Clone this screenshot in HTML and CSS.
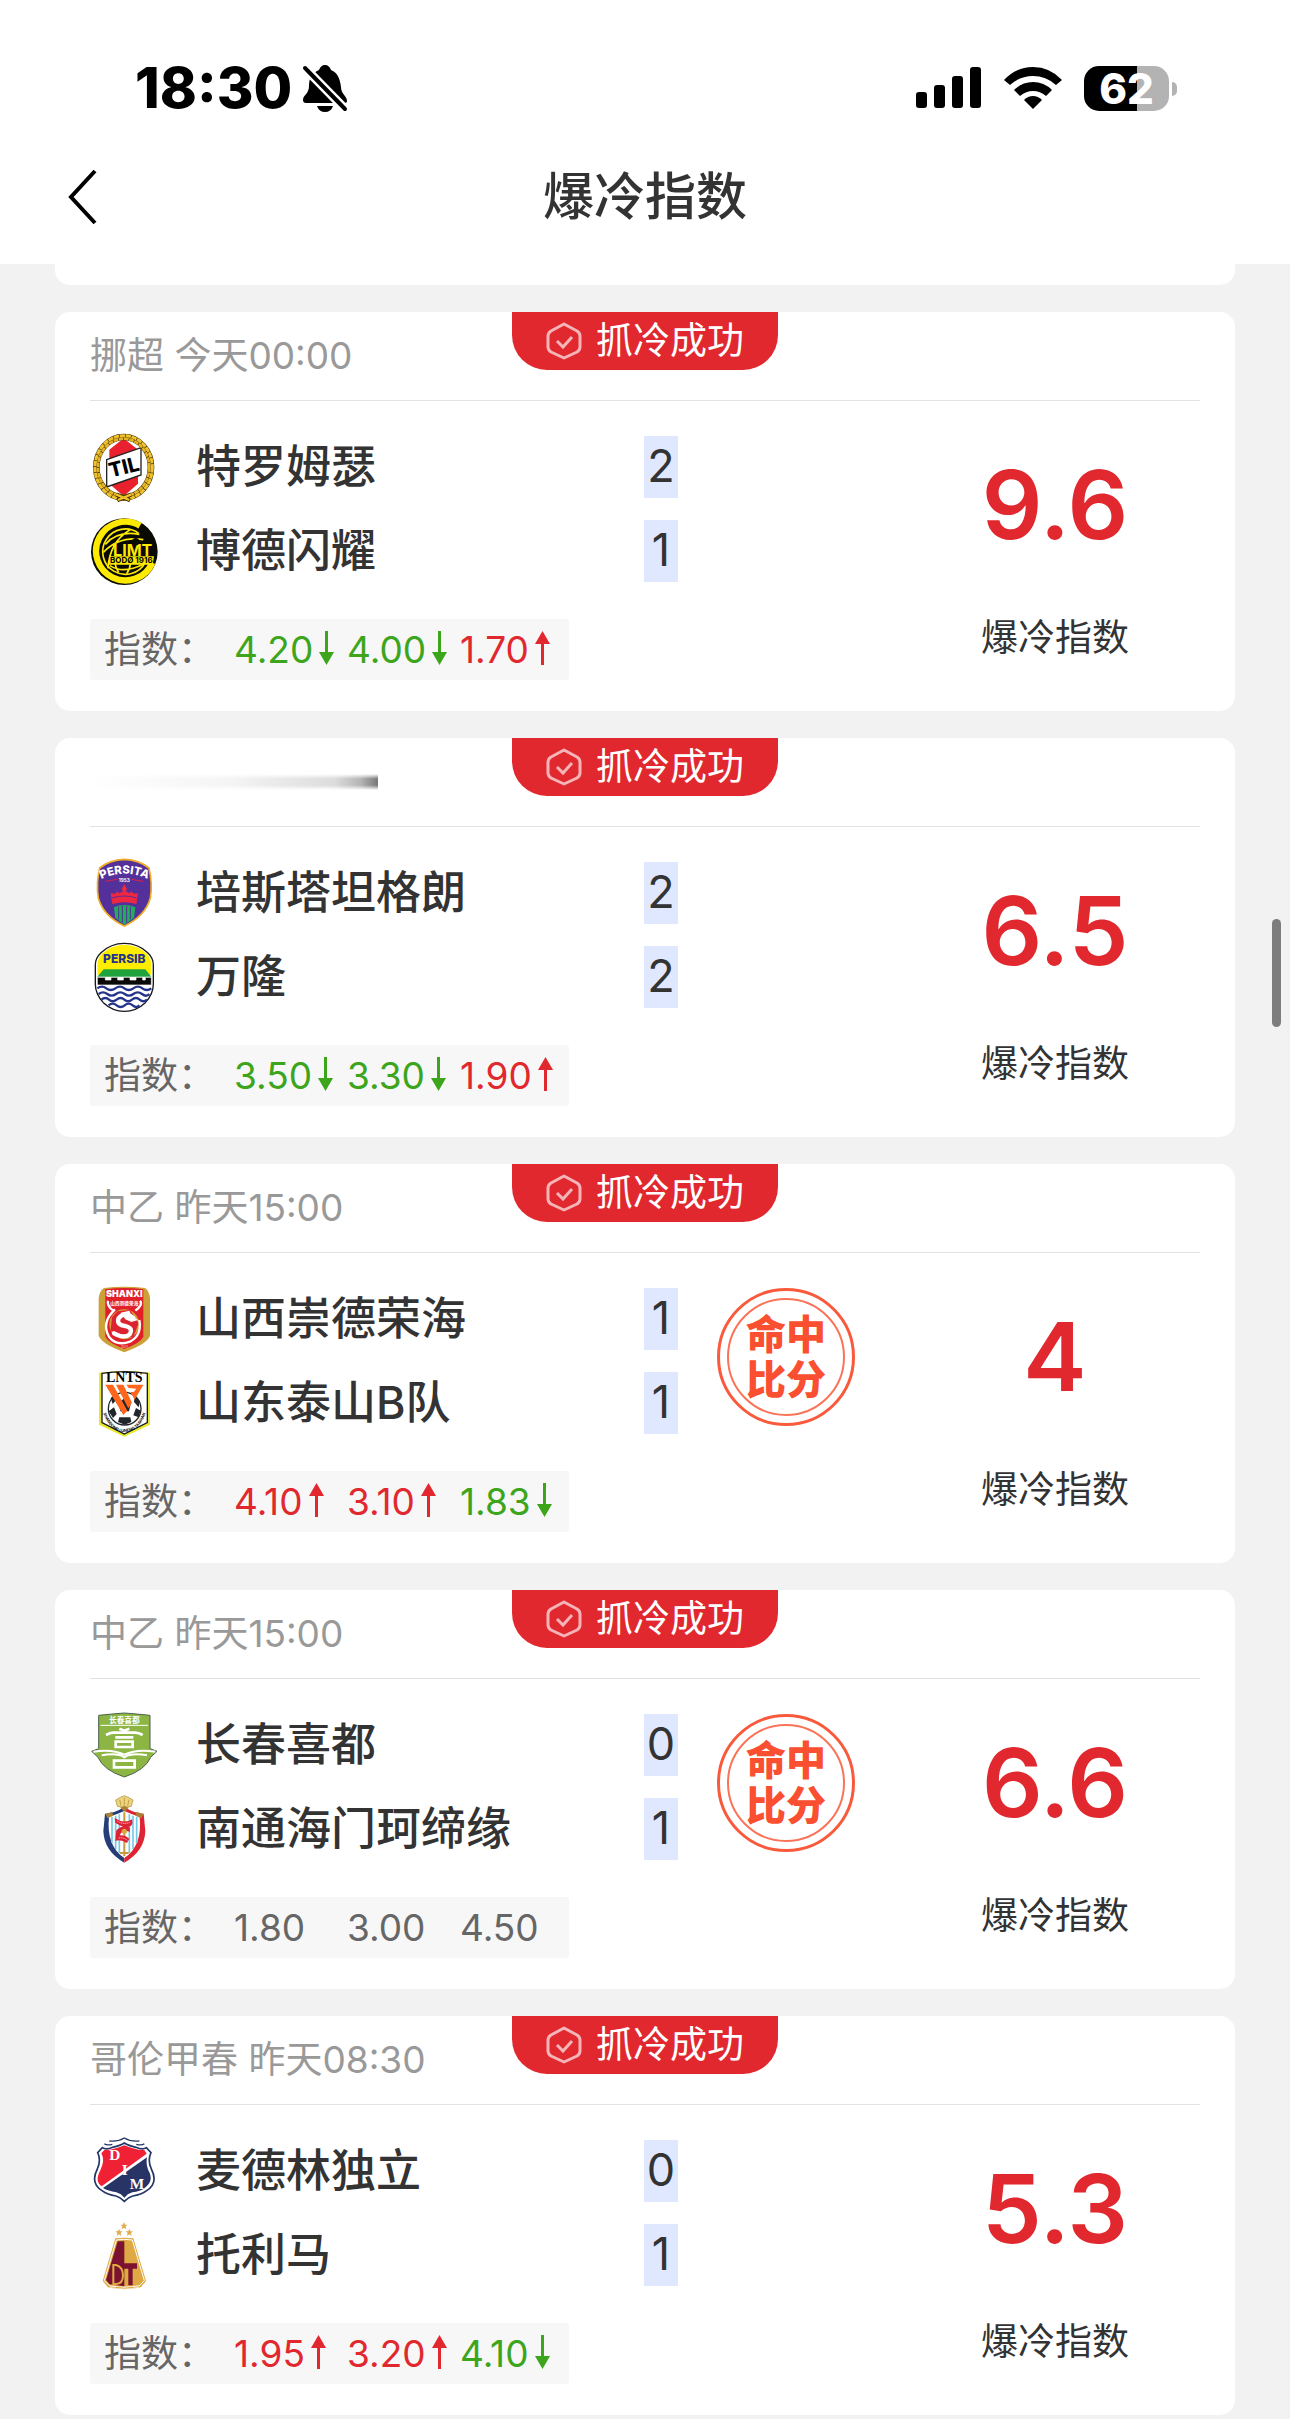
FILE: index.html
```html
<!DOCTYPE html>
<html lang="zh-CN">
<head>
    <meta charset="UTF-8">
    <meta name="viewport" content="width=device-width, initial-scale=1.0">
    <title>爆冷指数</title>
    <link rel="stylesheet" href="styles.css">
</head>
<body>

    <!-- shared icons -->
    <svg class="sprite" aria-hidden="true">
        <symbol id="icon-check" viewBox="0 0 36 38">
            <path d="M18 2 L31 9 Q34 11 34 14 V25 Q34 28 31 30 L18 36 L5 30 Q2 28 2 25 V14 Q2 11 5 9 Z" fill="none" stroke="currentColor" stroke-width="3" stroke-linejoin="round"/>
            <path d="M11 19 L17 25 L26 15" fill="none" stroke="currentColor" stroke-width="3"/>
        </symbol>
        <symbol id="icon-down" viewBox="0 0 15 36">
            <path d="M7.5 1 V26" stroke="currentColor" stroke-width="3"/>
            <path d="M0 22 H15 L7.5 35 Z" fill="currentColor"/>
        </symbol>
        <symbol id="icon-up" viewBox="0 0 15 36">
            <path d="M7.5 10 V35" stroke="currentColor" stroke-width="3"/>
            <path d="M0 14 H15 L7.5 1 Z" fill="currentColor"/>
        </symbol>
    </svg>

    <header class="top">
        <div class="status">
            <span class="clock">18:30</span>
            <svg class="bell" viewBox="0 0 46 48" width="46" height="48">
                <path d="M23 1 C26 1 28 3 29 6 C36 9 38 15 39 23 C39 30 45 32 45 37 Q45 39 42 39 H4 Q1 39 1 36 C1 31 7 30 7 22 C7 14 10 9 17 6 C18 3 20 1 23 1 Z"/>
                <path d="M15 42 H31 Q29 48 23 48 Q17 48 15 42 Z"/>
                <path d="M0 1 L45 47" stroke="#fff" stroke-width="9"/>
                <path d="M3 4 L43 45" stroke="#000" stroke-width="4" stroke-linecap="round"/>
            </svg>
            <div class="indicators">
                <svg viewBox="0 0 66 42" width="66" height="42">
                    <rect x="0" y="25" width="11" height="16" rx="3"/>
                    <rect x="18" y="18" width="11" height="23" rx="3"/>
                    <rect x="36" y="9" width="11" height="32" rx="3"/>
                    <rect x="54" y="0" width="11" height="41" rx="3"/>
                </svg>
                <svg viewBox="0 0 58 42" width="58" height="42">
                    <path d="M0 13 Q12 0 29 0 Q46 0 58 13 L52 18 Q42 9 29 9 Q16 9 6 18 Z"/>
                    <path d="M10 23 Q18 15 29 15 Q40 15 48 23 L42 29 Q36 24 29 24 Q22 24 16 29 Z"/>
                    <path d="M20 33 Q24 29 29 29 Q34 29 38 33 L29 42 Z"/>
                </svg>
                <div class="battery"><span>62</span></div>
            </div>
        </div>
        <nav class="nav">
            <button class="back" type="button" aria-label="返回">
                <svg viewBox="0 0 30 56" width="30" height="56"><path d="M27 2 L3 28 L27 54" fill="none" stroke="#000" stroke-width="4"/></svg>
            </button>
            <h1>爆冷指数</h1>
        </nav>
    </header>

    <main class="list">
        <div class="card card-tail"></div>

        <article class="card">
            <div class="card-head">
                <span class="meta">挪超 今天00:00</span>
                <span class="badge"><svg><use href="#icon-check"/></svg>抓冷成功</span>
            </div>
            <div class="card-body">
                <div class="teams">
                    <div class="team">
                        <svg class="crest" viewBox="30 39 210 210">
                            <ellipse cx="131" cy="145" rx="76" ry="86" fill="#fff"/>
                            <path d="M131 58 L174 92 V194 L131 232 L88 194 V92 Z" fill="#e9202e"/>
                            <path d="M80 122 L183 86 V168 L80 204 Z" fill="#fff" stroke="#222" stroke-width="4"/>
                            <ellipse cx="131" cy="145" rx="82" ry="91" fill="none" stroke="#3d2e08" stroke-width="20"/>
                            <ellipse cx="131" cy="145" rx="86" ry="95" fill="none" stroke="#f0c22c" stroke-width="9" stroke-dasharray="16 2"/>
                            <ellipse cx="131" cy="145" rx="77" ry="86" fill="none" stroke="#e5b426" stroke-width="8" stroke-dasharray="14 2"/>
                            <path d="M108 226 L150 244 M154 226 L112 244" stroke="#3d2e08" stroke-width="12"/>
                            <path d="M108 226 L148 243 M154 226 L114 243" stroke="#f0c22c" stroke-width="7"/>
                            <text x="132" y="165" transform="rotate(-14 133 145)" text-anchor="middle" class="til">TIL</text>
                        </svg>
                        <span>特罗姆瑟</span>
                    </div>
                    <div class="team">
                        <svg class="crest" viewBox="30 291 210 210">
                            <circle cx="133" cy="398" r="100" fill="#0a0a05"/>
                            <path d="M180 320 A88 88 0 1 0 217 431" fill="none" stroke="#fdea00" stroke-width="19"/>
                            <g fill="none" stroke="#fdea00" stroke-width="5">
                                <path d="M176 343 A68 68 0 1 0 196 430"/>
                                <path d="M76 376 Q112 334 178 346 M70 400 Q118 350 190 362 M84 448 Q88 370 150 332 M116 460 Q104 440 106 430 M90 440 Q130 466 190 436 M140 464 Q150 450 152 430"/>
                            </g>
                            <text x="158" y="410" text-anchor="middle" class="limt">LIMT</text>
                            <circle cx="167" cy="368" r="11" fill="#0a0a05"/>
                            <path d="M87 412 H222 L218 437 H87 Z" fill="#fdea00"/>
                            <text x="154" y="433" text-anchor="middle" class="bodo">BODØ 1916</text>
                        </svg>
                        <span>博德闪耀</span>
                    </div>
                </div>
                <div class="scores"><span>2</span><span>1</span></div>
                <div class="mark"></div>
                <div class="odds">
                    <span class="odds-label">指数：</span>
                    <span class="odd down">4.20<svg><use href="#icon-down"/></svg></span>
                    <span class="odd down">4.00<svg><use href="#icon-down"/></svg></span>
                    <span class="odd up">1.70<svg><use href="#icon-up"/></svg></span>
                </div>
                <div class="index"><strong>9.6</strong><span>爆冷指数</span></div>
            </div>
        </article>

        <article class="card">
            <div class="card-head">
                <span class="smear"></span>
                <span class="badge"><svg><use href="#icon-check"/></svg>抓冷成功</span>
            </div>
            <div class="card-body">
                <div class="teams">
                    <div class="team">
                        <svg class="crest" viewBox="30 42 210 210">
                            <path d="M133 46 Q178 48 207 72 Q218 118 211 162 Q196 216 133 246 Q70 216 55 162 Q48 118 59 72 Q88 48 133 46 Z" fill="#54309a" stroke="#f1ac27" stroke-width="5"/>
                            <path id="persita-arc" d="M58 108 Q133 70 209 108" fill="none"/>
                            <text text-anchor="middle" class="persita"><textPath href="#persita-arc" startOffset="50%">PERSITA</textPath></text>
                            <text x="133" y="113" text-anchor="middle" class="persita-year">1953</text>
                            <path d="M76 112 L112 106 M154 106 L190 112" stroke="#df1f43" stroke-width="3"/>
                            <path d="M133 121 L141 135 L137 142 L149 148 L154 142 L160 149 L174 148 L169 180 Q133 170 97 180 L92 148 L106 149 L112 142 L118 148 L129 142 L125 135 Z" fill="#ef2740"/>
                            <path d="M96 162 Q133 150 170 162" fill="none" stroke="#54309a" stroke-width="3"/>
                            <path d="M102 190 Q133 176 166 190 L162 222 L133 242 L106 222 Z" fill="#20ad5b"/>
                            <path d="M116 188 V226 M127 186 V236 M140 186 V236 M151 188 V226" stroke="#54309a" stroke-width="3"/>
                        </svg>
                        <span>培斯塔坦格朗</span>
                    </div>
                    <div class="team">
                        <svg class="crest" viewBox="30 294 210 210">
                            <path d="M133 298 Q174 298 203 326 Q220 342 220 362 V420 Q220 450 196 476 Q168 502 133 502 Q98 502 70 476 Q46 450 46 420 V362 Q46 342 63 326 Q92 298 133 298 Z" fill="#fff" stroke="#15171c" stroke-width="4"/>
                            <path d="M133 302 Q174 303 201 330 Q214 345 214 362 V392 H52 V362 Q52 345 65 330 Q92 303 133 302 Z" fill="#ffed00"/>
                            <path d="M71 376 H196 L214 398 H52 Z" fill="#20a33c"/>
                            <path d="M52 423 V400 H76 V408 H93 V400 H113 V408 H130 V400 H150 V408 H168 V400 H188 V408 H196 V400 H214 V423 Z" fill="#090909" stroke="#fff" stroke-width="2"/>
                            <g fill="none" stroke="#24338b" stroke-width="7">
                                <path d="M52 433 q14 -10 27 0 t27 0 t27 0 t27 0 t27 0 t27 0"/>
                                <path d="M56 450 q13 -10 26 0 t26 0 t26 0 t26 0 t26 0 t22 0"/>
                                <path d="M64 467 q12 -10 23 0 t23 0 t23 0 t23 0 t23 0 t22 0"/>
                                <path d="M86 484 q12 -10 24 0 t24 0 t24 0 t20 0"/>
                            </g>
                            <text x="133" y="356" text-anchor="middle" class="persib">PERSIB</text>
                        </svg>
                        <span>万隆</span>
                    </div>
                </div>
                <div class="scores"><span>2</span><span>2</span></div>
                <div class="mark"></div>
                <div class="odds">
                    <span class="odds-label">指数：</span>
                    <span class="odd down">3.50<svg><use href="#icon-down"/></svg></span>
                    <span class="odd down">3.30<svg><use href="#icon-down"/></svg></span>
                    <span class="odd up">1.90<svg><use href="#icon-up"/></svg></span>
                </div>
                <div class="index"><strong>6.5</strong><span>爆冷指数</span></div>
            </div>
        </article>

        <article class="card">
            <div class="card-head">
                <span class="meta">中乙 昨天15:00</span>
                <span class="badge"><svg><use href="#icon-check"/></svg>抓冷成功</span>
            </div>
            <div class="card-body">
                <div class="teams">
                    <div class="team">
                        <svg class="crest" viewBox="30 42 210 210">
                            <path d="M72 54 Q133 46 195 54 Q207 62 210 84 V196 Q206 220 133 247 Q60 220 56 196 V84 Q59 62 72 54 Z" fill="#cda038"/>
                            <path d="M76 58 Q133 50 190 58 V200 Q182 218 133 237 Q84 218 76 200 Z" fill="#e01f2b"/>
                            <circle cx="133" cy="163" r="45" fill="#d89b3a"/>
                            <path d="M112 124 L150 120 L176 160 L160 200 L112 206 L92 180 L96 142 Z" fill="#db2430"/>
                            <path d="M105 118 Q62 158 88 202 Q110 230 152 214 Q186 195 178 150 M166 122 Q190 104 180 92 M100 122 Q80 108 84 92" fill="none" stroke="#fff" stroke-width="7"/>
                            <path d="M160 144 Q132 122 115 146 Q110 166 136 168 Q161 174 149 193 Q133 207 102 190" fill="none" stroke="#fff" stroke-width="13" stroke-linecap="round"/>
                            <path d="M122 128 L148 122 L154 136 L174 150 L154 156 L136 148 Z" fill="#fff"/>
                            <text x="133" y="81" text-anchor="middle" class="shanxi">SHANXI</text>
                            <text x="133" y="104" text-anchor="middle" class="shanxi-cn">山西崇德荣海</text>
                            <text x="133" y="233" text-anchor="middle" class="shanxi-year">2021</text>
                        </svg>
                        <span>山西崇德荣海</span>
                    </div>
                    <div class="team">
                        <svg class="crest" viewBox="30 294 210 210">
                            <path d="M57 308 Q133 298 210 308 V464 L133 500 L57 464 Z" fill="#e9e82a"/>
                            <path d="M66 310 Q133 300 202 310 V458 L133 492 L66 458 Z" fill="#fff" stroke="#171a1d" stroke-width="4"/>
                            <circle cx="134" cy="416" r="49" fill="#fff" stroke="#20262b" stroke-width="4"/>
                            <path d="M116 398 L134 384 L153 398 L147 424 H121 Z M92 384 L104 374 L114 384 L98 402 Z M164 376 L180 394 L176 412 L162 396 Z M86 424 L102 412 L110 432 L99 444 Z M168 414 L182 422 L176 442 L160 436 Z M118 442 H151 L154 456 L134 464 L114 456 Z" fill="#20262b"/>
                            <path d="M76 344 H99 L142 422 L130 435 Z M108 344 H130 L156 398 L145 415 Z M139 344 H190 L164 389 L151 366 H161 L169 356 L146 354 Z" fill="#ff661c"/>
                            <text x="133" y="336" text-anchor="middle" class="lnts">LNTS</text>
                            <path id="lnts-arc" d="M70 430 Q92 488 134 486 Q178 484 197 430" fill="none"/>
                            <text text-anchor="middle" class="luneng"><textPath href="#lnts-arc" startOffset="50%">SHANDONG LUNENG TAISHAN</textPath></text>
                        </svg>
                        <span>山东泰山B队</span>
                    </div>
                </div>
                <div class="scores"><span>1</span><span>1</span></div>
                <div class="mark"><span class="stamp">命中<br>比分</span></div>
                <div class="odds">
                    <span class="odds-label">指数：</span>
                    <span class="odd up">4.10<svg><use href="#icon-up"/></svg></span>
                    <span class="odd up">3.10<svg><use href="#icon-up"/></svg></span>
                    <span class="odd down">1.83<svg><use href="#icon-down"/></svg></span>
                </div>
                <div class="index"><strong>4</strong><span>爆冷指数</span></div>
            </div>
        </article>

        <article class="card">
            <div class="card-head">
                <span class="meta">中乙 昨天15:00</span>
                <span class="badge"><svg><use href="#icon-check"/></svg>抓冷成功</span>
            </div>
            <div class="card-body">
                <div class="teams">
                    <div class="team">
                        <svg class="crest" viewBox="30 30 210 210">
                            <path d="M56 46 Q94 42 133 39 Q172 42 210 46 V146 L231 154 L212 172 Q196 210 133 231 Q70 210 54 172 L35 154 L56 146 Z" fill="#8cb543" stroke="#4d6150" stroke-width="3"/>
                            <text x="133" y="69" text-anchor="middle" class="changchun">长春喜都</text>
                            <path d="M62 76 H204" stroke="#fff" stroke-width="3"/>
                            <g fill="none" stroke="#fff" stroke-width="8">
                                <path d="M78 105 Q92 98 100 98 H166 Q176 98 188 105 M118 86 L133 92 L148 86 M106 112 H160"/>
                                <path d="M107 125 H158 V141 H107 Z"/>
                                <path d="M40 155 Q96 146 133 164 Q170 146 226 155 M65 166 Q112 158 133 172 Q154 158 201 166" stroke-width="6"/>
                                <path d="M102 182 H164 V202 H102 Z"/>
                            </g>
                        </svg>
                        <span>长春喜都</span>
                    </div>
                    <div class="team">
                        <svg class="crest" viewBox="30 285 210 210">
                            <path d="M112 322 L107 303 L119 296 L133 290 L147 296 L159 303 L154 322 Q133 330 112 322 Z" fill="#edd47c" stroke="#a98932" stroke-width="2"/>
                            <path d="M119 302 L123 320 M133 296 V320 M147 302 L143 320" stroke="#a98932" stroke-width="2"/>
                            <path d="M75 344 Q106 342 133 323 V491 Q72 456 70 396 Z" fill="#253d78"/>
                            <path d="M191 344 Q160 342 133 323 V491 Q194 456 196 396 Z" fill="#de2434"/>
                            <path d="M87 353 Q112 346 133 336 Q154 346 179 353 Q188 440 133 477 Q78 440 87 353 Z" fill="#fff"/>
                            <path d="M96 354 V432 M107 350 V450 M118 346 V462 M148 346 V462 M159 350 V450 M170 354 V432" stroke="#75c9e6" stroke-width="5"/>
                            <path d="M77 346 L96 338 L100 350 L82 358 Z M170 338 L190 346 L184 358 L166 350 Z M121 326 L133 320 L146 326 L133 338 Z" fill="#a98236"/>
                            <path d="M133 340 V472 M120 462 H146" stroke="#c69a3c" stroke-width="6"/>
                            <path d="M104 357 Q132 376 156 361 Q160 378 151 382 Q130 388 106 371 Z M109 394 Q128 376 149 385 L150 398 Q126 390 119 409 Q136 408 148 419 L141 432 Q122 420 106 426 Z" fill="#df2136"/>
                            <path d="M111 366 Q131 378 150 370 M116 417 Q130 414 142 424" fill="none" stroke="#fff" stroke-width="2" stroke-dasharray="4 2"/>
                            <circle cx="133" cy="397" r="8" fill="#d7a645"/>
                        </svg>
                        <span>南通海门珂缔缘</span>
                    </div>
                </div>
                <div class="scores"><span>0</span><span>1</span></div>
                <div class="mark"><span class="stamp">命中<br>比分</span></div>
                <div class="odds">
                    <span class="odds-label">指数：</span>
                    <span class="odd">1.80</span>
                    <span class="odd">3.00</span>
                    <span class="odd">4.50</span>
                </div>
                <div class="index"><strong>6.6</strong><span>爆冷指数</span></div>
            </div>
        </article>

        <article class="card">
            <div class="card-head">
                <span class="meta">哥伦甲春 昨天08:30</span>
                <span class="badge"><svg><use href="#icon-check"/></svg>抓冷成功</span>
            </div>
            <div class="card-body">
                <div class="teams">
                    <div class="team">
                        <svg class="crest" viewBox="30 33 210 210">
                            <path d="M88 48 Q113 51 133 39 Q153 51 178 48 M73 56 Q80 62 97 58 M169 58 Q186 62 193 56" fill="none" stroke="#243767" stroke-width="4"/>
                            <path d="M67 68 Q78 76 98 67 Q121 62 133 54 Q145 62 168 67 Q188 76 199 68 L213 83 Q202 105 214 132 Q236 174 200 197 Q184 209 158 213 Q144 217 133 229 Q122 217 108 213 Q82 209 66 197 Q30 174 52 132 Q64 105 53 83 Z" fill="#fff" stroke="#243767" stroke-width="5"/>
                            <path d="M73 75 Q95 77 133 61 Q171 77 193 75 L200 86 L65 184 Q43 169 61 136 Q76 106 64 85 Z" fill="#f02035"/>
                            <path d="M201 97 Q197 115 205 136 Q224 168 193 190 Q181 199 157 202 Q142 206 133 218 Q124 206 109 202 Q84 198 69 189 Z" fill="#293466"/>
                            <text x="104" y="105" text-anchor="middle" class="dim">D</text>
                            <text x="134" y="150" text-anchor="middle" class="dim">I</text>
                            <text x="171" y="191" text-anchor="middle" class="dim">M</text>
                        </svg>
                        <span>麦德林独立</span>
                    </div>
                    <div class="team">
                        <svg class="crest" viewBox="30 285 210 210">
                            <g fill="#dfac50">
                                <path id="star" d="M132 291 L135 299 H143 L137 304 L139 313 L132 308 L125 313 L127 304 L121 299 H129 Z"/>
                                <use href="#star" x="-15" y="20"/>
                                <use href="#star" x="16" y="20"/>
                            </g>
                            <path d="M106 340 Q133 336 160 340 L198 468 L182 487 Q133 499 84 487 L68 468 Z" fill="#dfaa43"/>
                            <path d="M109 345 Q133 341 157 345 L193 467 L178 482 Q133 491 88 482 L73 467 Z" fill="none" stroke="#fff" stroke-width="3"/>
                            <path d="M113 349 H133 V415 H171 V431 H158 V481 H145 V431 H133 V484 L89 478 L78 465 Z" fill="#7b1230"/>
                            <path d="M100 420 H108 Q129 426 129 451 Q129 477 108 477 H100 Z" fill="none" stroke="#dfaa43" stroke-width="6"/>
                            <path d="M90 487 Q133 497 176 487" stroke="#fff" stroke-width="2" fill="none"/>
                        </svg>
                        <span>托利马</span>
                    </div>
                </div>
                <div class="scores"><span>0</span><span>1</span></div>
                <div class="mark"></div>
                <div class="odds">
                    <span class="odds-label">指数：</span>
                    <span class="odd up">1.95<svg><use href="#icon-up"/></svg></span>
                    <span class="odd up">3.20<svg><use href="#icon-up"/></svg></span>
                    <span class="odd down">4.10<svg><use href="#icon-down"/></svg></span>
                </div>
                <div class="index"><strong>5.3</strong><span>爆冷指数</span></div>
            </div>
        </article>
    </main>

    <div class="scroll-thumb"></div>

</body>
</html>
```
FILE: styles.css
```css
* {
    box-sizing: border-box;
}
body {
    margin: 0;
    background: #f2f2f2;
    color: #333;
    font-family: Inter, "Noto Sans CJK SC", sans-serif;
    font-size: 37px;
    line-height: 50px;
}
.sprite {
    display: none;
}

/* header */
.top {
    background: #fff;
    height: 264px;
    padding-top: 56px;
}
.status {
    display: flex;
    align-items: center;
    height: 64px;
    padding: 0 113px 0 135px;
}
.clock {
    color: #000;
    font-size: 56px;
    font-weight: 800;
}
.bell {
    margin-left: 10px;
}
.indicators {
    display: flex;
    align-items: center;
    gap: 22px;
    margin-left: auto;
}
.battery {
    position: relative;
    width: 85px;
    height: 45px;
    margin-right: 8px;
    border-radius: 15px;
    background: linear-gradient(to right, #000 62%, #b3b3b3 62%);
    color: #fff;
    font-size: 42px;
    font-weight: 800;
    line-height: 45px;
    text-align: center;
}
.battery::after {
    content: "";
    position: absolute;
    right: -8px;
    top: 16px;
    width: 5px;
    height: 14px;
    border-radius: 0 5px 5px 0;
    background: #b3b3b3;
}
.nav {
    display: grid;
    grid-template-columns: 98px 1fr 98px;
    align-items: center;
    height: 154px;
}
.back {
    display: flex;
    justify-content: flex-end;
    padding: 0;
    border: none;
    background: none;
    cursor: pointer;
}
h1 {
    margin: 0;
    font-size: 51px;
    font-weight: 500;
    text-align: center;
}

/* match cards */
.list {
    display: flex;
    flex-direction: column;
    gap: 27px;
    padding: 0 55px 4px;
}
.card {
    padding: 0 35px 31px;
    border-radius: 15px;
    background: #fff;
}
.card-tail {
    height: 21px;
    padding: 0;
    border-radius: 0 0 15px 15px;
}
.card-head {
    display: grid;
    grid-template-columns: 1fr 266px 1fr;
    align-items: center;
    height: 89px;
    border-bottom: 1px solid #e3e3e3;
}
.meta {
    color: #999;
    white-space: nowrap;
}
.smear {
    width: 288px;
    height: 16px;
    background: linear-gradient(to right, #fff, #f4f4f4 50%, #dcdcdc 85%, #b5b5b5 94%, #777);
    mask-image: linear-gradient(to bottom, transparent, #000 30%, #000 70%, transparent);
}
.badge {
    display: flex;
    align-items: center;
    align-self: start;
    justify-content: center;
    gap: 14px;
    height: 58px;
    border-radius: 0 0 35px 35px;
    background: #e1282e;
    color: #fff;
}
.badge svg {
    width: 36px;
    height: 38px;
    color: #f5b5b8;
}
.card-body {
    display: grid;
    grid-template-columns: 1fr 34px 232px 290px;
    padding-top: 35px;
}
.teams,
.scores {
    display: flex;
    flex-direction: column;
    gap: 22px;
}
.team {
    display: flex;
    align-items: center;
    gap: 36px;
    height: 62px;
    font-size: 45px;
    font-weight: 500;
}
.crest {
    width: 70px;
    height: 70px;
}
.scores span {
    height: 62px;
    background: #dfe8ff;
    font-size: 45px;
    line-height: 60px;
    text-align: center;
}
.stamp {
    display: flex;
    align-items: center;
    justify-content: center;
    width: 138px;
    height: 138px;
    margin-left: 39px;
    border: 3px solid #fa5a3c;
    border-radius: 50%;
    outline: 2px solid #fa7358;
    outline-offset: -12px;
    color: #fa4f30;
    font-size: 40px;
    font-style: oblique 8deg;
    font-weight: 900;
    line-height: 45px;
}
.odds {
    grid-row: 2;
    grid-column: 1;
    justify-self: start;
    display: grid;
    grid-template-columns: 130px 113px 113px 109px;
    align-items: center;
    height: 61px;
    margin-top: 37px;
    padding: 0 0 0 14px;
    border-radius: 3px;
    background: #f7f7f7;
    color: #666;
}
.odds-label {
    white-space: nowrap;
}
.odd {
    display: flex;
    align-items: center;
    gap: 6px;
}
.odd svg {
    width: 15px;
    height: 36px;
    margin-bottom: 4px;
}
.up {
    color: #e1282e;
}
.down {
    color: #3da51c;
}
.index {
    grid-row: 1 / 3;
    grid-column: 4;
    display: flex;
    flex-direction: column;
    align-items: center;
    gap: 58px;
    padding-top: 19px;
}
.index strong {
    color: #e1282e;
    font-size: 95px;
    font-weight: 600;
    line-height: 100px;
}
.scroll-thumb {
    position: fixed;
    top: 38%;
    right: 9px;
    width: 9px;
    height: 108px;
    border-radius: 5px;
    background: #7d7d7d;
}

/* lettering on the crests */
.til {
    font-size: 60px;
    font-weight: 800;
}
.limt {
    fill: #fdea00;
    font-size: 48px;
    font-weight: 700;
}
.bodo {
    font-size: 24px;
    font-weight: 700;
}
.persita {
    fill: #fff;
    font-size: 34px;
    font-weight: 800;
}
.persita-year {
    fill: #fff;
    font-size: 14px;
    font-weight: 700;
}
.persib {
    fill: #24338b;
    font-size: 36px;
    font-weight: 800;
}
.shanxi {
    fill: #fff;
    font-size: 27px;
    font-weight: 900;
}
.shanxi-cn {
    fill: #fff;
    font-size: 14px;
    font-weight: 700;
}
.shanxi-year {
    fill: #f5c9a0;
    font-size: 9px;
}
.lnts {
    font-family: "Liberation Serif", serif;
    font-size: 42px;
    font-weight: 700;
}
.luneng {
    font-size: 12px;
    font-weight: 700;
}
.changchun {
    fill: #fff;
    font-size: 23px;
    font-weight: 700;
}
.dim {
    fill: #fff;
    font-family: "Liberation Serif", serif;
    font-size: 46px;
    font-weight: 700;
}
```
